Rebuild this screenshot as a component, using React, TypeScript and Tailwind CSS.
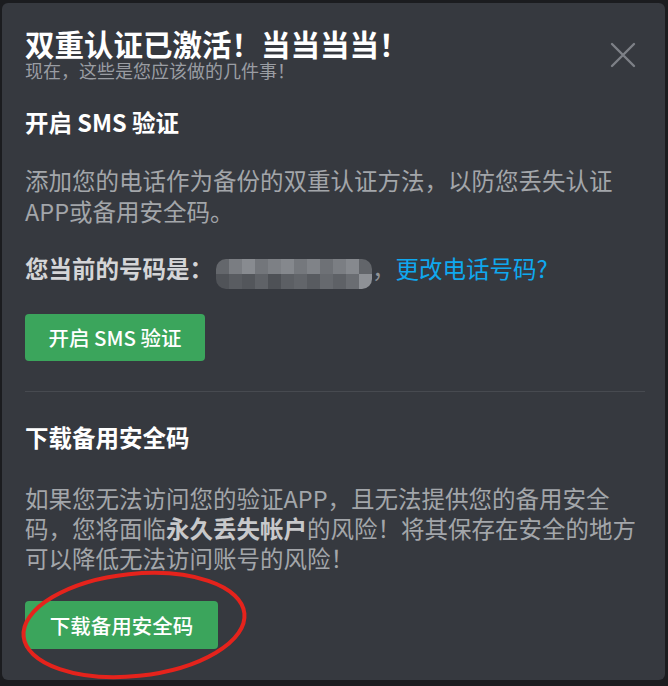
import * as React from "react";

const blurTop = [
  "bg-[#64676c]", "bg-[#7a7d82]", "bg-[#888b90]", "bg-[#73767b]", "bg-[#7d8085]",
  "bg-[#85888d]", "bg-[#75787d]", "bg-[#808388]", "bg-[#6e7176]", "bg-[#7b7e83]",
  "bg-[#86898e]", "bg-[#62656a]",
];
const blurBottom = [
  "bg-[#505358]", "bg-[#595c61]", "bg-[#53565b]", "bg-[#5f6267]", "bg-[#4e5156]",
  "bg-[#5c5f64]", "bg-[#62656a]", "bg-[#585b60]", "bg-[#66696e]", "bg-[#5e6166]",
  "bg-[#6a6d72]", "bg-[#8e9196]",
];

function PhoneBlur() {
  return (
    <span className="inline-flex flex-col w-[156px] h-[30px] rounded-[10px] overflow-hidden">
      <span className="flex h-[15px]">
        {blurTop.map((c, i) => (
          <span key={i} className={`w-[13px] h-full ${c}`} />
        ))}
      </span>
      <span className="flex h-[15px]">
        {blurBottom.map((c, i) => (
          <span key={i} className={`w-[13px] h-full ${c}`} />
        ))}
      </span>
    </span>
  );
}

export default function App() {
  return (
    <div
      className="w-[668px] h-[686px] bg-[#1b1c1f] pt-[3px] pl-[2px] overflow-hidden"
      style={{ fontFamily: '"Noto Sans CJK SC", "Noto Sans", sans-serif' }}
    >
      <div className="relative w-[663px] h-[677px] bg-[#36393f] rounded-[6px] pl-[23px] pr-[20px] pt-[23px]">
        {/* close */}
        <button className="absolute left-[607px] top-[38px] w-[28px] h-[28px] flex items-center justify-center">
          <svg width="26" height="26" viewBox="0 0 26 26" fill="none" stroke="#7d8087" strokeWidth="2.4" strokeLinecap="round">
            <path d="M2 2 L24 24 M24 2 L2 24" />
          </svg>
        </button>

        <h1 className="text-[29.5px] leading-[34px] font-bold text-white">双重认证已激活！当当当当！</h1>
        <p className="text-[18px] leading-[20px] text-[#9a9da3]">现在，这些是您应该做的几件事！</p>

        <h2 className="mt-[27px] text-[23.5px] leading-[30px] font-bold text-white">开启 SMS 验证</h2>
        <p className="mt-[28px] text-[23.5px] leading-[31px] text-[#a3a6aa]">
          添加您的电话作为备份的双重认证方法，以防您丢失认证
          <br />
          APP或备用安全码。
        </p>

        <div className="mt-[26px] flex items-center h-[31px] text-[23.5px] leading-[31px]">
          <span className="font-bold text-[#d4d5d7]">您当前的号码是：</span>
          <span className="ml-[3px]"><PhoneBlur /></span>
          <span className="text-[#8e9196]">，</span>
          <a className="text-[#0fa8ef]">更改电话号码?</a>
        </div>

        <button className="mt-[30px] w-[180px] h-[47px] rounded-[4px] bg-[#3ba55c] text-white text-[20.5px] font-medium">
          开启 SMS 验证
        </button>

        <div className="mt-[30px] h-[1px] w-[620px] bg-[#474a50]" />

        <h2 className="mt-[30px] text-[23.5px] leading-[30px] font-bold text-white">下载备用安全码</h2>
        <p className="mt-[31px] text-[23.5px] leading-[30px] text-[#a3a6aa] whitespace-nowrap">
          如果您无法访问您的验证APP，且无法提供您的备用安全
          <br />
          码，您将面临<span className="font-bold text-[#c8c9cb]">永久丢失帐户</span>的风险！将其保存在安全的地方
          <br />
          可以降低无法访问账号的风险！
        </p>

        <button className="mt-[28px] w-[193px] h-[48px] rounded-[4px] bg-[#3ba55c] text-white text-[20.5px] font-medium">
          下载备用安全码
        </button>

        {/* red annotation circle */}
        <svg
          className="absolute left-[16px] top-[564px] pointer-events-none"
          width="232"
          height="116"
          viewBox="0 0 232 116"
          fill="none"
        >
          <ellipse
            cx="116"
            cy="58"
            rx="111"
            ry="51"
            stroke="#e5231c"
            strokeWidth="4"
            transform="rotate(-6 116 58)"
          />
        </svg>
      </div>
    </div>
  );
}
